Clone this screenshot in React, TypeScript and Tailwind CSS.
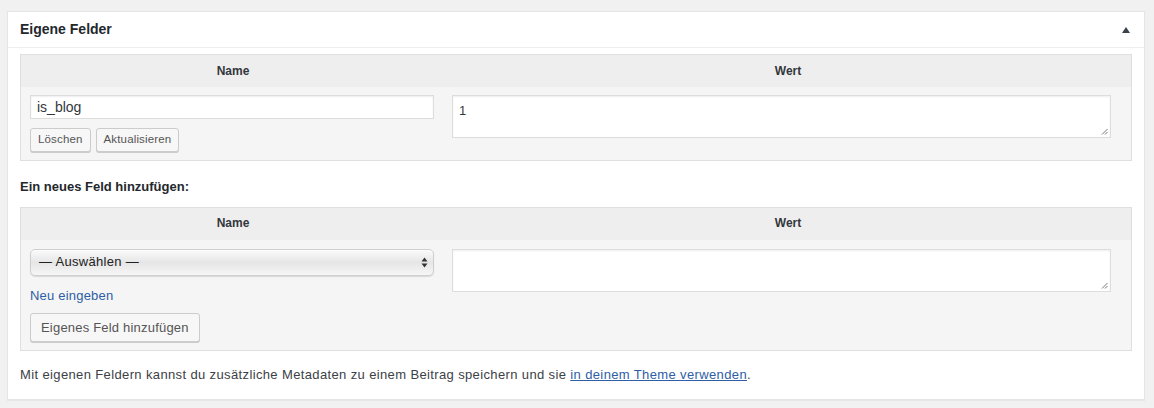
import React from 'react';

function SmallButton({ children }: { children: React.ReactNode }) {
  return (
    <button
      type="button"
      className="h-[24px] rounded-[3px] border border-[#cccccc] bg-[#f7f7f7] px-[7px] text-[11.5px] leading-none tracking-[0.15px] text-[#555555] shadow-[0_1px_0_#cccccc]"
    >
      {children}
    </button>
  );
}

function Textarea({ value }: { value?: string }) {
  return (
    <div className="relative h-[43px] w-full border border-[#dddddd] bg-white px-[6px] pt-[5px] text-[13px] text-[#32373c] shadow-[inset_0_1px_2px_rgba(0,0,0,0.07)]">
      {value}
      <svg className="absolute bottom-[2px] right-[2px]" width="7" height="7" viewBox="0 0 7 7">
        <path d="M1 6.5 L6.5 1 M4 6.5 L6.5 4" stroke="#555" strokeWidth="0.8" />
      </svg>
    </div>
  );
}

function TableHead() {
  return (
    <div className="grid h-[32px] grid-cols-[424px_1fr] items-center border-b border-[#eeeeee] bg-[#eeeeee] text-[12px] font-bold text-[#32373c]">
      <div className="text-center">Name</div>
      <div className="text-center">Wert</div>
    </div>
  );
}

export default function App() {
  return (
    <div className="min-h-[408px] bg-[#f1f1f1] px-[7px] pt-[11px] font-['Liberation_Sans',Arial,sans-serif]">
      <div className="w-[1138px] border border-[#e5e5e5] bg-white shadow-[0_1px_1px_rgba(0,0,0,0.04)]">
        {/* box header */}
        <div className="flex h-[36px] items-center justify-between border-b border-[#eeeeee] pl-[12px] pr-[14px]">
          <h2 className="text-[14px] font-bold text-[#23282d]">Eigene Felder</h2>
          <svg width="8" height="6" viewBox="0 0 8 6">
            <path d="M4 0 L8 6 L0 6 Z" fill="#3c434a" />
          </svg>
        </div>

        <div className="px-[12px] pb-[14px] pt-[6px]">
          {/* existing fields */}
          <div className="border border-[#dfdfdf] bg-[#f5f5f5]">
            <TableHead />
            <div className="grid grid-cols-[424px_1fr] pb-[8px] pt-[8px]">
              <div className="pl-[9px] pr-[11px]">
                <div className="flex h-[24px] items-center border border-[#dddddd] bg-white px-[6px] text-[14px] text-[#32373c] shadow-[inset_0_1px_2px_rgba(0,0,0,0.07)]">
                  is_blog
                </div>
                <div className="mt-[9px] flex gap-[5px]">
                  <SmallButton>Löschen</SmallButton>
                  <SmallButton>Aktualisieren</SmallButton>
                </div>
              </div>
              <div className="pl-[7px] pr-[20px]">
                <Textarea value="1" />
              </div>
            </div>
          </div>

          <p className="mb-[10px] mt-[16px] text-[13px] font-bold text-[#23282d]">Ein neues Feld hinzufügen:</p>

          {/* new field */}
          <div className="border border-[#dfdfdf] bg-[#f5f5f5]">
            <TableHead />
            <div className="grid grid-cols-[424px_1fr] pb-[8px] pt-[9px]">
              <div className="pl-[9px] pr-[11px]">
                <div className="flex h-[27px] items-center justify-between rounded-[5px] border border-[#cfcfcf] bg-gradient-to-b from-[#fbfbfb] via-[#e6e6e6] to-[#f6f6f6] pl-[8px] pr-[5px] text-[13px] tracking-[0.3px] text-[#222222] shadow-[0_1px_1px_rgba(0,0,0,0.12)]">
                  <span>— Auswählen —</span>
                  <svg width="7" height="11" viewBox="0 0 7 11">
                    <path d="M3.5 0.5 L6.5 4.5 L0.5 4.5 Z M3.5 10.5 L6.5 6.5 L0.5 6.5 Z" fill="#333" />
                  </svg>
                </div>
                <a href="#" className="mt-[10px] block text-[13px] tracking-[0.2px] text-[#2e5ea5]">Neu eingeben</a>
                <div className="mt-[8px]">
                  <button
                    type="button"
                    className="h-[29px] rounded-[3px] border border-[#cccccc] bg-[#f7f7f7] px-[10px] text-[13px] leading-none tracking-[0.2px] text-[#555555] shadow-[0_1px_0_#cccccc]"
                  >
                    Eigenes Feld hinzufügen
                  </button>
                </div>
              </div>
              <div className="pl-[7px] pr-[20px]">
                <Textarea />
              </div>
            </div>
          </div>

          <p className="mt-[14px] text-[13px] tracking-[0.37px] text-[#3c4146]">
            Mit eigenen Feldern kannst du zusätzliche Metadaten zu einem Beitrag speichern und sie{' '}
            <a href="#" className="text-[#2e5ea5] underline">in deinem Theme verwenden</a>.
          </p>
        </div>
      </div>
    </div>
  );
}
